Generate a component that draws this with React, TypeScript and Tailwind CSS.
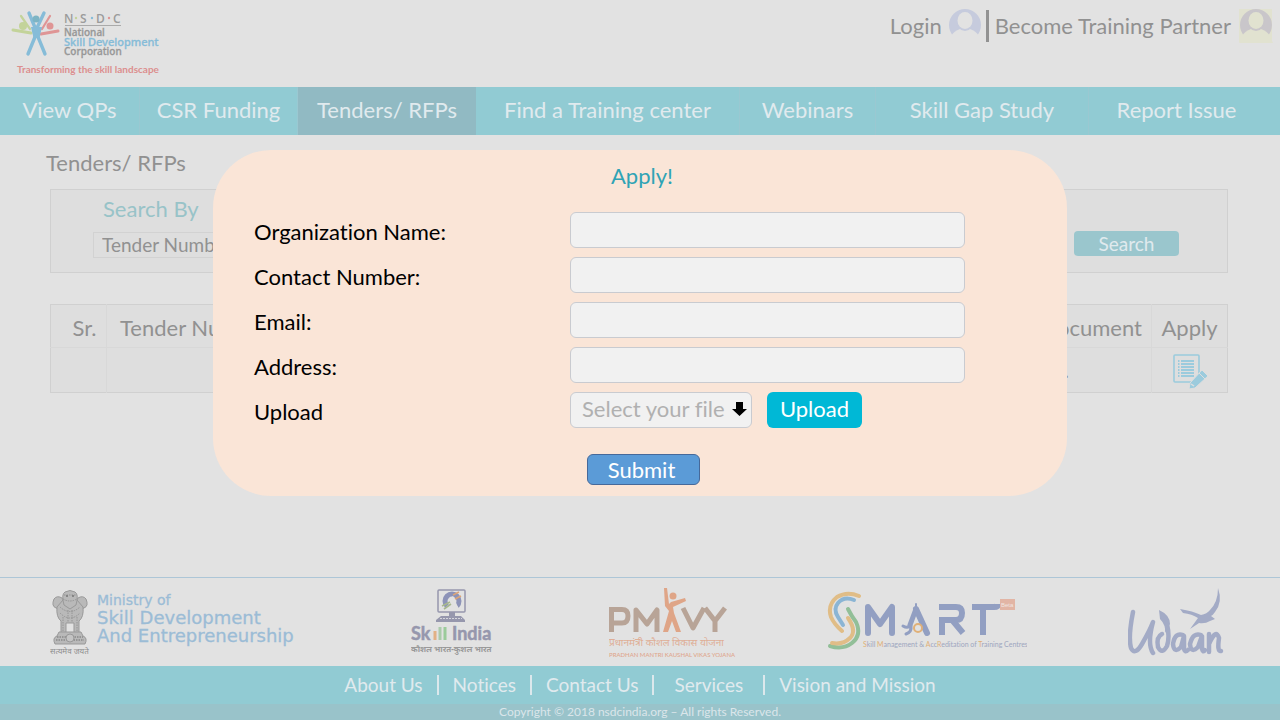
import type { ReactNode } from "react";

const navItems = [
  { label: "View QPs", active: false },
  { label: "CSR Funding", active: false },
  { label: "Tenders/ RFPs", active: true },
  { label: "Find a Training center", active: false },
  { label: "Webinars", active: false },
  { label: "Skill Gap Study", active: false },
  { label: "Report Issue", active: false },
];

const fields = [
  { id: "organization", label: "Organization Name:", type: "text" },
  { id: "contact", label: "Contact Number:", type: "tel" },
  { id: "email", label: "Email:", type: "email" },
  { id: "address", label: "Address:", type: "text" },
];

function NsdcLogo() {
  return (
    <svg width="152" height="68" viewBox="0 -1 152 68" role="img" aria-label="NSDC">
      <g fill="none" strokeLinecap="round">
        <g stroke="#c3d39a" strokeWidth="2.2">
          <path d="M10 6 L19 19" />
          <path d="M2 20 L20 23" strokeWidth="3" />
        </g>
        <g stroke="#df9595" strokeWidth="2.2">
          <path d="M39 6 L31 19" />
          <path d="M47 21 L30 24" strokeWidth="3" />
        </g>
        <g stroke="#86bcd8" strokeWidth="3.4">
          <path d="M18 3 L25 20 L33 3" />
          <path d="M17 44 L24 27 L25 20 L27 27 L34 44" />
        </g>
      </g>
      <path d="M20 17 H31 L28 30 L25.500 27 L23 30 Z" fill="#86bcd8" />
      <circle cx="25" cy="9" r="3.500" fill="#7db4c4" />
      <circle cx="12" cy="16" r="4" fill="#c3d39a" />
      <circle cx="39" cy="16" r="3.500" fill="#df9595" />
      <g fill="#9b9b9b" fontSize="12" fontWeight="600" fontFamily="'Open Sans', sans-serif">
        <text x="53" y="13">N</text>
        <text x="69" y="13">S</text>
        <text x="85" y="13">D</text>
        <text x="102" y="13">C</text>
      </g>
      <circle cx="65" cy="8" r="1.200" fill="#c3d39a" />
      <circle cx="81" cy="8" r="1.200" fill="#86bcd8" />
      <circle cx="98" cy="8" r="1.200" fill="#df9595" />
      <path d="M54 15.500 H110" stroke="#aaa" />
      <g fontSize="11" fontWeight="500" fontFamily="'Noto Sans', sans-serif" strokeWidth="0.300">
        <text x="53" y="26" fill="#979797" stroke="#979797" fontSize="10">National</text>
        <text x="53" y="36" fill="#86bcd8" stroke="#86bcd8">Skill Development</text>
        <text x="53" y="45" fill="#979797" stroke="#979797" fontSize="10">Corporation</text>
      </g>
      <text x="6" y="63" fill="#dc8f8f" fontSize="10" fontWeight="700" fontFamily="Lato, sans-serif">
        Transforming the skill landscape
      </text>
    </svg>
  );
}

function Avatar({ variant }: { variant: "blue" | "yellow" }) {
  const blue = variant === "blue";
  const ring = blue ? "#c6cbdd" : "#c9c6ca";
  const ground = blue ? "#e2e2e2" : "#e1e2d0";
  return (
    <svg width="34" height="34" viewBox="0 0 34 34" aria-hidden="true">
      {!blue && <rect width="33" height="33" fill={ground} />}
      <circle cx="17" cy="16" r="16" fill={ring} />
      <path d="M0 34 L3 27 Q6 22 12 20 H22 Q28 22 31 27 L34 34 Z" fill={ground} />
      <ellipse cx="17" cy="12" rx="9" ry="10" fill={ring} />
      <ellipse cx="17" cy="11.500" rx="7.500" ry="8.500" fill={ground} />
    </svg>
  );
}

function ApplyIcon() {
  return (
    <svg width="36" height="36" viewBox="0 0 36 36" aria-hidden="true">
      <rect x="2" y="1" width="25" height="27" rx="1" fill="none" stroke="#9bcbdd" strokeWidth="1.600" />
      <g stroke="#9bcbdd" strokeWidth="2">
        <path d="M9 7H22M9 10H22M9 13H22M9 16H22M9 19H22M9 22H22" />
        <path d="M6 7H7.500M6 10H7.500M6 13H7.500M6 16H7.500M6 19H7.500M6 22H7.500" />
      </g>
      <path d="M17 35 L18 29 L30 16 L36 22 L23 34 Z" fill="#9bcbdd" stroke="#dedede" />
      <path d="M27 19 L33 25" stroke="#dedede" />
      <path d="M19 30 L22 32" stroke="#dedede" strokeWidth="1.500" />
    </svg>
  );
}

function MinistryLogo() {
  return (
    <svg width="250" height="72" viewBox="0 -4 250 72" role="img" aria-label="Ministry of Skill Development And Entrepreneurship">
      <g fill="#b9b9b9" stroke="#999" strokeWidth="1">
        <path d="M6 18 Q1 16 4 9 Q7 5 12 8 L14 11 L12 20 Z" />
        <path d="M34 18 Q39 16 36 9 Q33 5 28 8 L26 11 L28 20 Z" />
        <path d="M7 17 Q6 27 11 31 V43 H16 V33 H24 V43 H29 V31 Q34 27 33 17 L27 10 H13 Z" />
        <path d="M14 15 Q11 4 15 2 Q20 -1 25 2 Q29 4 26 15 L20 19 Z" />
        <path d="M9 42 H31 L33 46 Q38 48 35 54 H5 Q2 48 7 46 Z" />
      </g>
      <g fill="none" stroke="#959595" strokeDasharray="1.500 1">
        <path d="M14 5 H26 M13 9 Q20 13 27 9 M10 17 Q20 26 30 17 M10 23 Q20 33 30 23 M13 27 V42 M27 27 V42 M18 20 V32 M22 20 V32" />
        <path d="M7 47 H33 M6 50 H34" strokeWidth="2" />
      </g>
      <circle cx="20" cy="48" r="4" fill="#c4c4c4" stroke="#999" />
      <circle cx="17" cy="6" r="1" fill="#777" />
      <circle cx="23" cy="6" r="1" fill="#777" />
      <text x="0" y="64" fill="#8f8f8f" fontSize="8" fontFamily="'Noto Sans', sans-serif">सत्यमेव जयते</text>
      <g fill="#9bbcd6" stroke="#9bbcd6" strokeWidth="0.300" fontFamily="'DejaVu Sans', sans-serif">
        <text x="47" y="15" fontSize="14">Ministry of</text>
        <text x="47" y="34" fontSize="18">Skill Development</text>
        <text x="47" y="52" fontSize="18">And Entrepreneurship</text>
      </g>
    </svg>
  );
}

function SkillIndiaLogo() {
  return (
    <svg width="90" height="72" viewBox="0 -3 90 72" role="img" aria-label="Skill India">
      <rect x="27" y="1" width="27" height="22" rx="1" fill="none" stroke="#9697ad" strokeWidth="1.500" />
      <path d="M38 23 H44 V27 H50 L54 31 V33 H25 V31 L30 27 H38 Z" fill="#9697ad" />
      <path d="M29 29.500 H51" stroke="#d5d5dc" strokeDasharray="2 1" />
      <path d="M36 17 A7 7 0 1 1 46 17" fill="none" stroke="#8d93b8" strokeWidth="5" />
      <path d="M37 11 L42 7 L47 18 L43 19 Z" fill="#e2e2e2" />
      <path d="M31 17 L39 13 M33 20 L40 15" stroke="#a7b78e" strokeWidth="1.600" />
      <path d="M42 6 L48 3 M44 10 L50 7" stroke="#dca477" strokeWidth="1.600" />
      <g fontFamily="Lato, sans-serif" fontSize="18" fontWeight="700" fill="#9697ad" stroke="#9697ad" strokeWidth="0.500">
        <text x="0" y="51">Sk</text>
        <text x="41" y="51">India</text>
      </g>
      <path d="M24 42 V51" stroke="#e2b185" strokeWidth="3" />
      <path d="M29 38 V51" stroke="#aacbaa" strokeWidth="3" />
      <path d="M34 38 V51" stroke="#9bcb9b" strokeWidth="3" />
      <text x="0" y="63" fontSize="8" fontWeight="700" fill="#999" fontFamily="'Noto Sans', sans-serif">कौशल भारत-कुशल भारत</text>
    </svg>
  );
}

function PmkvyLogo() {
  return (
    <svg width="128" height="76" viewBox="0 -2 128 76" role="img" aria-label="PMKVY">
      <g fill="none" stroke="#b8a497" strokeWidth="5">
        <path d="M2.500 46 V23.500 H13 Q19 23.500 19 30 Q19 37 13 37 H3" />
        <path d="M27 46 V24 L38 38 L48 24 V46" strokeLinejoin="round" />
        <path d="M74 22 L84 42 L95 22" strokeLinejoin="round" />
        <path d="M96 22 L106 35 L116 22 M106 34 V46" />
      </g>
      <path d="M55 2 L56 20 L60 25 L54 46 H59 L63 35 L67 46 H72 L65 27 L64 21 L77 15 L76 12 L62 16 L60 18 L58 2 Z" fill="#dfa587" />
      <circle cx="64" cy="10" r="3.500" fill="#dfa587" />
      <text x="0" y="60" fontSize="10" fill="#dfae96" fontFamily="'Noto Sans', sans-serif">प्रधानमंत्री कौशल विकास योजना</text>
      <text x="0" y="71" fontSize="6" fontWeight="500" fill="#dfa78d" fontFamily="Lato, sans-serif">PRADHAN MANTRI KAUSHAL VIKAS YOJANA</text>
    </svg>
  );
}

function SmartLogo() {
  return (
    <svg width="200" height="70" viewBox="0 0 200 70" role="img" aria-label="SMART">
      <g fill="none" strokeLinecap="round">
        <path d="M32 9 Q20 4 10 10 Q0 18 4 30 Q7 37 15 44" stroke="#e0bd87" strokeWidth="4" />
        <path d="M27 13 Q17 9 11 16 Q6 22 11 30 L16 38" stroke="#8bb5d4" strokeWidth="4" />
        <path d="M21 22 Q25 30 29 35 Q35 48 25 56 Q16 63 3 59" stroke="#92bf98" strokeWidth="4" />
        <path d="M21 31 Q30 44 23 51 Q16 58 5 56" stroke="#e0bd87" strokeWidth="4" />
      </g>
      <g fill="none" stroke="#929fc2" strokeWidth="6">
        <path d="M41 46 V20 L53 37 L65 20 V46" strokeLinejoin="round" strokeLinecap="round" />
        <path d="M115 48 V33 H129 Q135 33 135 26 Q135 20 129 20 H112" />
        <path d="M126 34 L136 46 M145 20 H167 Q171 20 171 17 M156 20 V48" />
      </g>
      <g fill="none" stroke="#929fc2" strokeLinecap="round">
        <path d="M89 22 L83 38" strokeWidth="5" />
        <path d="M89 22 L100 46" strokeWidth="6" />
        <path d="M83 38 Q81 42 76 39 M84 39 Q85 45 79 47" strokeWidth="3" />
        <path d="M89 17 V22" strokeWidth="2" />
      </g>
      <circle cx="91" cy="41" r="4" fill="#e2e2e2" stroke="#e0b078" strokeWidth="2" />
      <rect x="173" y="12" width="15" height="11" fill="#e2b5a5" />
      <text x="174" y="20" fontSize="6" fontFamily="'Liberation Sans', sans-serif" fill="#f0e6e2">Beta</text>
      <text x="36" y="60" fontSize="7" fontFamily="Lato, sans-serif" fill="#9da6c0">
        <tspan fill="#e0b078">S</tspan>kill <tspan fill="#e0b078">M</tspan>anagement &amp; <tspan fill="#e0b078">A</tspan>cc<tspan fill="#e0b078">R</tspan>editation of <tspan fill="#e0b078">T</tspan>raining Centres
      </text>
    </svg>
  );
}

function UdaanLogo() {
  return (
    <svg width="100" height="74" viewBox="0 -2 100 74" role="img" aria-label="Udaan">
      <g fill="none" stroke="#a3abc6" strokeWidth="4.500" strokeLinecap="round" strokeLinejoin="round">
        <path d="M5 25 Q0 50 3 61 Q7 69 14 57 Q22 43 25 35 Q19 57 25 66" />
        <path d="M39 37 Q42 50 39 59 Q34 68 30 60 Q28 50 34 47" />
        <path d="M55 48 Q47 45 45 57 Q46 67 53 60 L56 49 V62 Q57 66 60 63" />
        <path d="M73 48 Q65 45 62 57 Q63 67 70 60 L74 49 V62 Q75 66 77 63" />
        <path d="M81 47 V65 M81 57 Q88 41 91 51 Q89 65 93 64" />
      </g>
      <path d="M31 23 Q42 28 42 37 L37 46 Q38 38 32 32 Z" fill="#a3abc6" />
      <path d="M52 22 Q65 24 73 28 Q79 27 82 23 Q90 15 90 1 Q95 15 87 25 Q85 28 83 29 L87 32 L82 34 Q77 37 71 36 L62 42 L70 31 Q64 27 55 26 Z" fill="#a3abc6" />
    </svg>
  );
}

function FooterLink({ children }: { children: ReactNode }) {
  return <a href="#" className="whitespace-nowrap">{children}</a>;
}

function ApplyDialog() {
  return (
    <section
      role="dialog"
      aria-labelledby="apply-title"
      className="absolute inset-x-0 top-[150px] mx-auto h-[346px] w-[854px] rounded-[58px] bg-[#fae5d7] px-[41px] pt-3 text-black"
    >
      <h2 id="apply-title" className="pl-1 text-center text-[22px] leading-7 text-[#2fa3b5]">Apply!</h2>
      <form className="mt-[22px]" onSubmit={(event) => event.preventDefault()}>
        <div className="grid grid-cols-[316px_1fr] gap-y-[9px] text-[22px] leading-6">
          {fields.map((field) => (
            <div key={field.id} className="contents">
              <label htmlFor={field.id} className="self-center pt-1">{field.label}</label>
              <input id={field.id} type={field.type} className="h-9 w-[395px] rounded-md border border-[#c9cbd0] bg-[#f1f1f1] px-2" />
            </div>
          ))}
          <label htmlFor="file" className="self-center pt-1">Upload</label>
          <div className="flex items-center gap-[15px]">
            <div className="relative">
              <select id="file" className="h-9 w-[182px] appearance-none rounded-md border border-[#c9cbd0] bg-[#f1f1f1] pb-0.5 pl-[11px] text-[#b0b0b0]">
                <option>Select your file</option>
              </select>
              <svg className="pointer-events-none absolute top-[10px] right-[5px]" width="15" height="14" viewBox="0 0 15 14" aria-hidden="true">
                <path d="M4 0 H11 V7 H15 L7.500 14 L0 7 H4 Z" fill="#000" />
              </svg>
            </div>
            <button type="button" className="h-9 w-[95px] rounded-md bg-[#00b8d6] pb-0.5 text-white">Upload</button>
          </div>
        </div>
        <button type="submit" className="mt-[26px] ml-[333px] h-[31px] w-[113px] rounded-md border border-[#46699a] bg-[#5b9bd7] pr-1 text-[22px] leading-6 text-white">
          Submit
        </button>
      </form>
    </section>
  );
}

export default function App() {
  return (
    <div className="relative flex min-h-screen flex-col bg-[#e2e2e2] font-['Lato',sans-serif] text-[22px] leading-7 text-[#919191] [font-variant-ligatures:none]">
      <header className="flex h-[87px] items-start justify-between pt-[9px] pr-[7px] pl-[11px]">
        <NsdcLogo />
        <div className="flex items-center">
          <a href="#" className="mr-[6px]">Login</a>
          <Avatar variant="blue" />
          <span className="mr-[6px] ml-1 h-8 w-[3px] bg-[#929292]" />
          <a href="#" className="mr-2">Become Training Partner</a>
          <Avatar variant="yellow" />
        </div>
      </header>

      <nav className="grid h-12 grid-cols-[140fr_158fr_178fr_264fr_136fr_213fr_191fr] bg-[#91cbd3] text-[#e0eaee]">
        {navItems.map((item) => (
          <a
            key={item.label}
            href="#"
            className={
              item.active
                ? "flex items-center justify-center bg-[#91bac3] pb-0.5 whitespace-nowrap"
                : "flex items-center justify-center border-r border-[#9ac8d1] pb-0.5 whitespace-nowrap last:border-r-0 last:pr-4"
            }
          >
            {item.label}
          </a>
        ))}
      </nav>

      <main className="grow pt-[14px] pr-[52px] pl-[50px]">
        <h1 className="-ml-1">Tenders/ RFPs</h1>
        <form className="mt-3 flex h-[84px] items-start justify-between border border-[#d0d0d0] bg-[#dedede] pr-12 pl-[42px]" onSubmit={(event) => event.preventDefault()}>
          <div className="flex flex-col pt-[5px]">
            <label htmlFor="search-by" className="pl-[10px] text-[#98c3c8]">Search By</label>
            <select id="search-by" className="mt-[9px] h-[26px] w-[240px] appearance-none border border-[#d2d2d2] pl-2 text-[19px] leading-5">
              <option>Tender Number</option>
            </select>
          </div>
          <button type="submit" className="mt-[41px] h-[25px] w-[105px] rounded bg-[#9ac6cd] text-[19px] leading-6 text-[#e0eaee]">Search</button>
        </form>

        <table className="mt-[31px] w-full table-fixed border-collapse border border-[#d0d0d0] bg-[#dedede]">
          <colgroup>
            <col className="w-[56px]" />
            <col />
            <col className="w-[160px]" />
            <col className="w-[76px]" />
          </colgroup>
          <thead>
            <tr className="h-[43px] border-b border-[#d8d8d8]">
              <th scope="col" className="border-r border-[#d8d8d8] pt-1 pl-3 font-normal">Sr.</th>
              <th scope="col" className="pt-1 pl-[13px] text-left font-normal">Tender Number</th>
              <th scope="col" className="border-r border-[#d8d8d8] pt-1 pr-[9px] text-right font-normal">Document</th>
              <th scope="col" className="pt-1 font-normal">Apply</th>
            </tr>
          </thead>
          <tbody>
            <tr className="h-[45px]">
              <td className="border-r border-[#d8d8d8]" />
              <td />
              <td className="border-r border-[#d8d8d8] pr-[82px] text-right">.</td>
              <td className="pt-[3px]">
                <button type="button" aria-label="Apply" className="mx-auto block h-9 w-9">
                  <ApplyIcon />
                </button>
              </td>
            </tr>
          </tbody>
        </table>
      </main>

      <footer>
        <div className="grid h-[89px] grid-cols-[411fr_198fr_218fr_301fr_152fr] items-center border-t border-[#adc6d7]">
          <div className="pl-[50px]"><MinistryLogo /></div>
          <SkillIndiaLogo />
          <PmkvyLogo />
          <SmartLogo />
          <UdaanLogo />
        </div>
        <div className="flex h-[38px] items-center justify-center gap-[14px] bg-[#91cbd3] text-[19px] leading-6 text-[#e0eaee]">
          <FooterLink>About Us</FooterLink>
          <span className="h-5 w-[2px] bg-[#dce8ec]" />
          <FooterLink>Notices</FooterLink>
          <span className="h-5 w-[2px] bg-[#dce8ec]" />
          <FooterLink>Contact Us</FooterLink>
          <span className="h-5 w-[2px] bg-[#dce8ec]" />
          <span className="px-[6px]"><FooterLink>Services</FooterLink></span>
          <span className="h-5 w-[2px] bg-[#dce8ec]" />
          <FooterLink>Vision and Mission</FooterLink>
        </div>
        <p className="bg-[#99c3ca] text-center text-xs leading-4 text-[#dbe6ea]">Copyright © 2018 nsdcindia.org – All rights Reserved.</p>
      </footer>

      <ApplyDialog />
    </div>
  );
}
